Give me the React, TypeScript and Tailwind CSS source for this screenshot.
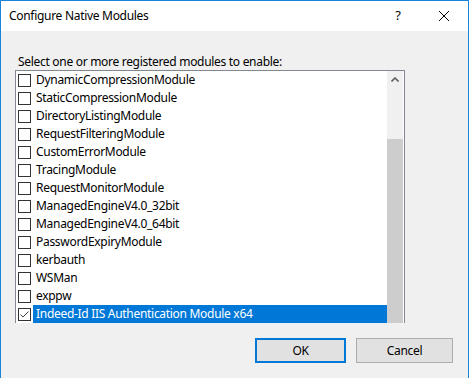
const modules = [
  "DynamicCompressionModule",
  "StaticCompressionModule",
  "DirectoryListingModule",
  "RequestFilteringModule",
  "CustomErrorModule",
  "TracingModule",
  "RequestMonitorModule",
  "ManagedEngineV4.0_32bit",
  "ManagedEngineV4.0_64bit",
  "PasswordExpiryModule",
  "kerbauth",
  "WSMan",
  "exppw",
  "Indeed-Id IIS Authentication Module x64",
];

function CheckBox({ checked }: { checked: boolean }) {
  return (
    <div className="w-[13px] h-[13px] border border-[#333333] bg-white flex items-center justify-center shrink-0">
      {checked && (
        <svg width="11" height="11" viewBox="0 0 11 11">
          <path d="M1.5 5.5 L4 8 L9.5 2.5" fill="none" stroke="#444444" strokeWidth="1" />
        </svg>
      )}
    </div>
  );
}

export default function App() {
  return (
    <div
      className="w-[469px] h-[378px] border-x border-t border-[#1883d7] flex flex-col bg-[#f0f0f0] text-[12px] tracking-[-0.3px] text-black overflow-hidden"
      style={{ fontFamily: '"Noto Sans", sans-serif' }}
    >
      <div className="h-[30px] bg-white flex items-center pl-[8px] shrink-0">
        <span className="flex-1">Configure Native Modules</span>
        <span className="w-[20px] text-center mr-[30px] text-[13px]">?</span>
        <svg width="12" height="12" viewBox="0 0 12 12" className="mr-[18px]">
          <path d="M1 1 L11 11 M11 1 L1 11" stroke="#000" strokeWidth="1" />
        </svg>
      </div>

      <div className="pt-[22px] h-[39px] shrink-0 pl-[17px]">
        Select one or more registered modules to enable:
      </div>

      <div className="ml-[14px] w-[390px] h-[253px] border-x border-t border-[#828790] bg-white flex shrink-0">
        <div className="flex-1 flex flex-col">
          {modules.map((m, i) => {
            const selected = i === modules.length - 1;
            return (
              <div key={m} className="h-[18px] flex items-center pl-[2px]">
                <CheckBox checked={selected} />
                <div
                  className={
                    selected
                      ? "flex-1 h-[18px] flex items-center pl-[3px] ml-[2px] bg-[#0078d7] text-white"
                      : "flex-1 h-[18px] flex items-center pl-[3px] ml-[2px]"
                  }
                >
                  {m}
                </div>
              </div>
            );
          })}
        </div>
        <div className="w-[16px] flex flex-col bg-[#f0f0f0] mr-[1px]">
          <div className="h-[17px] flex items-center justify-center">
            <svg width="8" height="5" viewBox="0 0 8 5">
              <path d="M0.5 4.5 L4 1 L7.5 4.5" fill="none" stroke="#606060" strokeWidth="1.6" />
            </svg>
          </div>
          <div className="h-[51px]" />
          <div className="flex-1 bg-[#cdcdcd]" />
        </div>
      </div>

      <div className="flex justify-end gap-[10px] pt-[15px] pr-[15px]">
        <button className="w-[91px] h-[25px] border-2 border-[#0078d7] bg-[#e1e1e1]">OK</button>
        <button className="w-[97px] h-[25px] border border-[#adadad] bg-[#e1e1e1]">Cancel</button>
      </div>
    </div>
  );
}
